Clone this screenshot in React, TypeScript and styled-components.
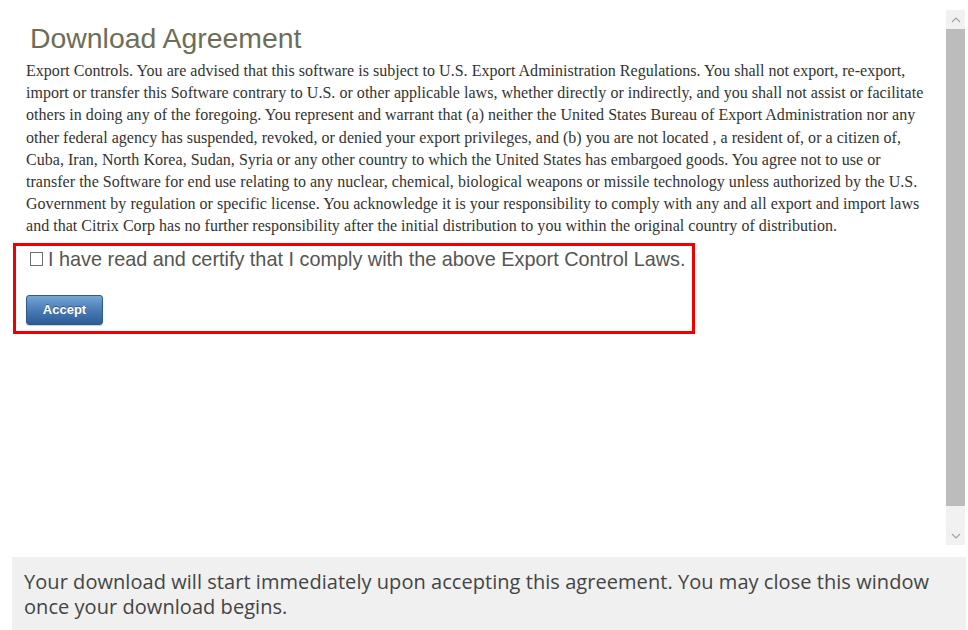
import React from "react";
import styled, { createGlobalStyle } from "styled-components";

const GlobalStyle = createGlobalStyle`
  html, body { margin: 0; padding: 0; background: #ffffff; }
  * { box-sizing: border-box; }
`;

const Page = styled.div`
  width: 968px;
  height: 630px;
  overflow: hidden;
  padding: 10px 2px 0 12px;
  display: flex;
  flex-direction: column;
  gap: 12px;
`;

const Frame = styled.div`
  height: 535px;
  display: flex;
  flex-direction: row;
`;

const Content = styled.div`
  flex: 1;
  overflow: hidden;
  padding-top: 12px;
`;

const Title = styled.h1`
  margin: 0 0 6px 18px;
  font-family: "Liberation Sans", Arial, sans-serif;
  font-weight: normal;
  font-size: 28.4px;
  line-height: 32px;
  color: #6d6d58;
`;

const Body = styled.p`
  margin: 0 0 5px 0;
  padding: 0 14px;
  font-family: "Liberation Serif", "Times New Roman", serif;
  font-size: 16px;
  letter-spacing: 0.03px;
  line-height: 22.2px;
  color: #333333;
`;

const CertifyBox = styled.div`
  margin-left: 1px;
  width: 682px;
  border: 3px solid #ee0000;
  padding: 1px 10px 6px 10px;
  display: flex;
  flex-direction: column;
  align-items: flex-start;
  gap: 24px;
`;

const CheckLine = styled.label`
  display: flex;
  align-items: center;
  margin-left: 4px;
  white-space: nowrap;
  font-family: "Liberation Sans", Arial, sans-serif;
  font-size: 19.85px;
  line-height: 24px;
  color: #555555;
`;

const CheckBox = styled.span`
  display: inline-block;
  flex: none;
  width: 13px;
  height: 14px;
  border: 1px solid #6f6f6f;
  margin-right: 5px;
  margin-top: 1px;
`;

const AcceptButton = styled.button`
  width: 77px;
  height: 30px;
  padding: 0;
  border: 1px solid #2d5b8e;
  border-radius: 3px;
  background: linear-gradient(to bottom, #78a5d6 0%, #4d7fb8 45%, #2b5c95 100%);
  box-shadow: 0 1px 1px rgba(0, 0, 0, 0.2);
  font-family: "Liberation Sans", Arial, sans-serif;
  font-weight: bold;
  font-size: 13px;
  color: #ffffff;
  text-shadow: 0 -1px 0 rgba(0, 0, 0, 0.35);
  cursor: pointer;
`;

const Scrollbar = styled.div`
  width: 19px;
  margin-right: 1px;
  background: #f1f1f1;
  display: flex;
  flex-direction: column;
`;

const ScrollArrow = styled.div`
  height: 19px;
  display: flex;
  align-items: center;
  justify-content: center;
`;

const Thumb = styled.div<{ $size: number }>`
  height: ${(p) => p.$size}px;
  background: #bcbcbc;
`;

const TrackRest = styled.div`
  flex: 1;
`;

const Notice = styled.div`
  flex: 1;
  background: #f0f0f0;
  padding: 12px 12px 0 12px;
  font-family: "Open Sans", "Noto Sans", sans-serif;
  font-size: 20px;
  letter-spacing: 0.05px;
  line-height: 25px;
  color: #444444;
`;

const Chevron = ({ up }: { up?: boolean }) => (
  <svg width="10" height="6" viewBox="0 0 10 6">
    <path
      d={up ? "M1 5 L5 1 L9 5" : "M1 1 L5 5 L9 1"}
      fill="none"
      stroke="#a3a3a3"
      strokeWidth="1.2"
    />
  </svg>
);

export default function App() {
  return (
    <>
      <GlobalStyle />
      <Page>
        <Frame>
          <Content>
            <Title>Download Agreement</Title>
            <Body>
              Export Controls. You are advised that this software is subject to U.S. Export
              Administration Regulations. You shall not export, re-export, import or transfer this
              Software contrary to U.S. or other applicable laws, whether directly or indirectly, and
              you shall not assist or facilitate others in doing any of the foregoing. You represent
              and warrant that (a) neither the United States Bureau of Export Administration nor any
              other federal agency has suspended, revoked, or denied your export privileges, and (b)
              you are not located , a resident of, or a citizen of, Cuba, Iran, North Korea, Sudan,
              Syria or any other country to which the United States has embargoed goods. You agree not
              to use or transfer the Software for end use relating to any nuclear, chemical,
              biological weapons or missile technology unless authorized by the U.S. Government by
              regulation or specific license. You acknowledge it is your responsibility to comply with
              any and all export and import laws and that Citrix Corp has no further responsibility
              after the initial distribution to you within the original country of distribution.
            </Body>
            <CertifyBox>
              <CheckLine>
                <CheckBox />I have read and certify that I comply with the above Export Control Laws.
              </CheckLine>
              <AcceptButton type="button">Accept</AcceptButton>
            </CertifyBox>
          </Content>
          <Scrollbar>
            <ScrollArrow>
              <Chevron up />
            </ScrollArrow>
            <Thumb $size={477} />
            <TrackRest />
            <ScrollArrow>
              <Chevron />
            </ScrollArrow>
          </Scrollbar>
        </Frame>
        <Notice>
          Your download will start immediately upon accepting this agreement. You may close this
          window once your download begins.
        </Notice>
      </Page>
    </>
  );
}
